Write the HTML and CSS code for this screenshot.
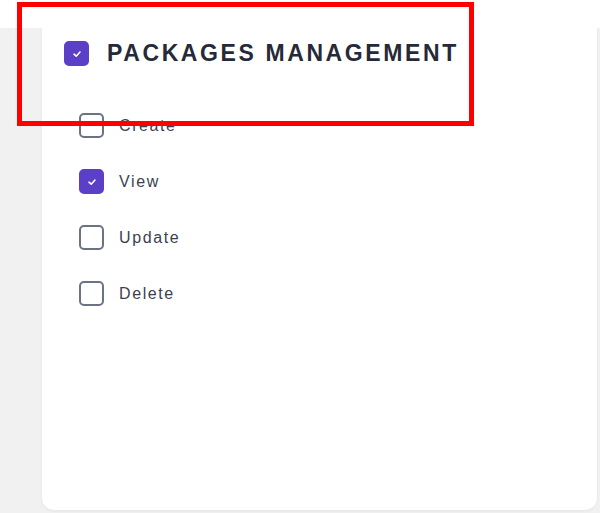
FILE: index.html
```html
<!DOCTYPE html>
<html lang="en">
<head>
    <meta charset="UTF-8">
    <title>Packages Management</title>
    <link rel="stylesheet" href="styles.css">
</head>
<body>
    <div class="topbar"></div>
    <div class="panel">
        <div class="card">
            <div class="group_head">
                <span class="box checked">
                    <svg viewBox="0 0 10 10" width="10" height="10"><path d="M2 5.2 L4.2 7.2 L8 3" fill="none" stroke="#fff" stroke-width="1.6" stroke-linecap="round" stroke-linejoin="round"/></svg>
                </span>
                <span class="group_title">PACKAGES MANAGEMENT</span>
            </div>
            <div class="perm_list">
                <label class="perm"><span class="box"></span>Create</label>
                <label class="perm"><span class="box checked">
                    <svg viewBox="0 0 10 10" width="10" height="10"><path d="M2 5.2 L4.2 7.2 L8 3" fill="none" stroke="#fff" stroke-width="1.6" stroke-linecap="round" stroke-linejoin="round"/></svg>
                </span>View</label>
                <label class="perm"><span class="box"></span>Update</label>
                <label class="perm"><span class="box"></span>Delete</label>
            </div>
        </div>
    </div>
    <div class="highlight"></div>
</body>
</html>
```

FILE: styles.css
```css
body {
    margin: 0;
    height: 513px;
    display: flex;
    flex-direction: column;
    background-color: #fff;
    font-family: "Liberation Sans", Arial, sans-serif;
    color: #2b2e3c;
    overflow: hidden;
}

.topbar {
    height: 28px;
    background-color: #fff;
}

.panel {
    flex: 1;
    display: flex;
    background-color: #f1f1f1;
    padding: 0 3px 3px 42px;
}

.card {
    flex: 1;
    background-color: #fff;
    border-radius: 0 0 12px 12px;
    box-shadow: 0 1px 3px rgba(0, 0, 0, 0.06);
    padding: 12px 22px;
}

.group_head {
    display: flex;
    align-items: center;
    gap: 18px;
}

.group_title {
    font-size: 23px;
    font-weight: 600;
    letter-spacing: 2.6px;
    color: #262a38;
}

.box {
    box-sizing: border-box;
    width: 25px;
    height: 25px;
    border: 2px solid #6b7383;
    border-radius: 5px;
    display: flex;
    align-items: center;
    justify-content: center;
    flex-shrink: 0;
}

.box.checked {
    background-color: #5b3fc6;
    border-color: #5b3fc6;
}

.perm_list {
    display: flex;
    flex-direction: column;
    gap: 31px;
    padding: 46px 0 0 15px;
}

.perm {
    display: flex;
    align-items: center;
    gap: 15px;
    font-size: 16px;
    letter-spacing: 1.6px;
    color: #3c3f52;
}

.highlight {
    position: absolute;
    top: 2px;
    left: 17px;
    width: 447px;
    height: 114px;
    border: 5px solid #ff0000;
}
```
